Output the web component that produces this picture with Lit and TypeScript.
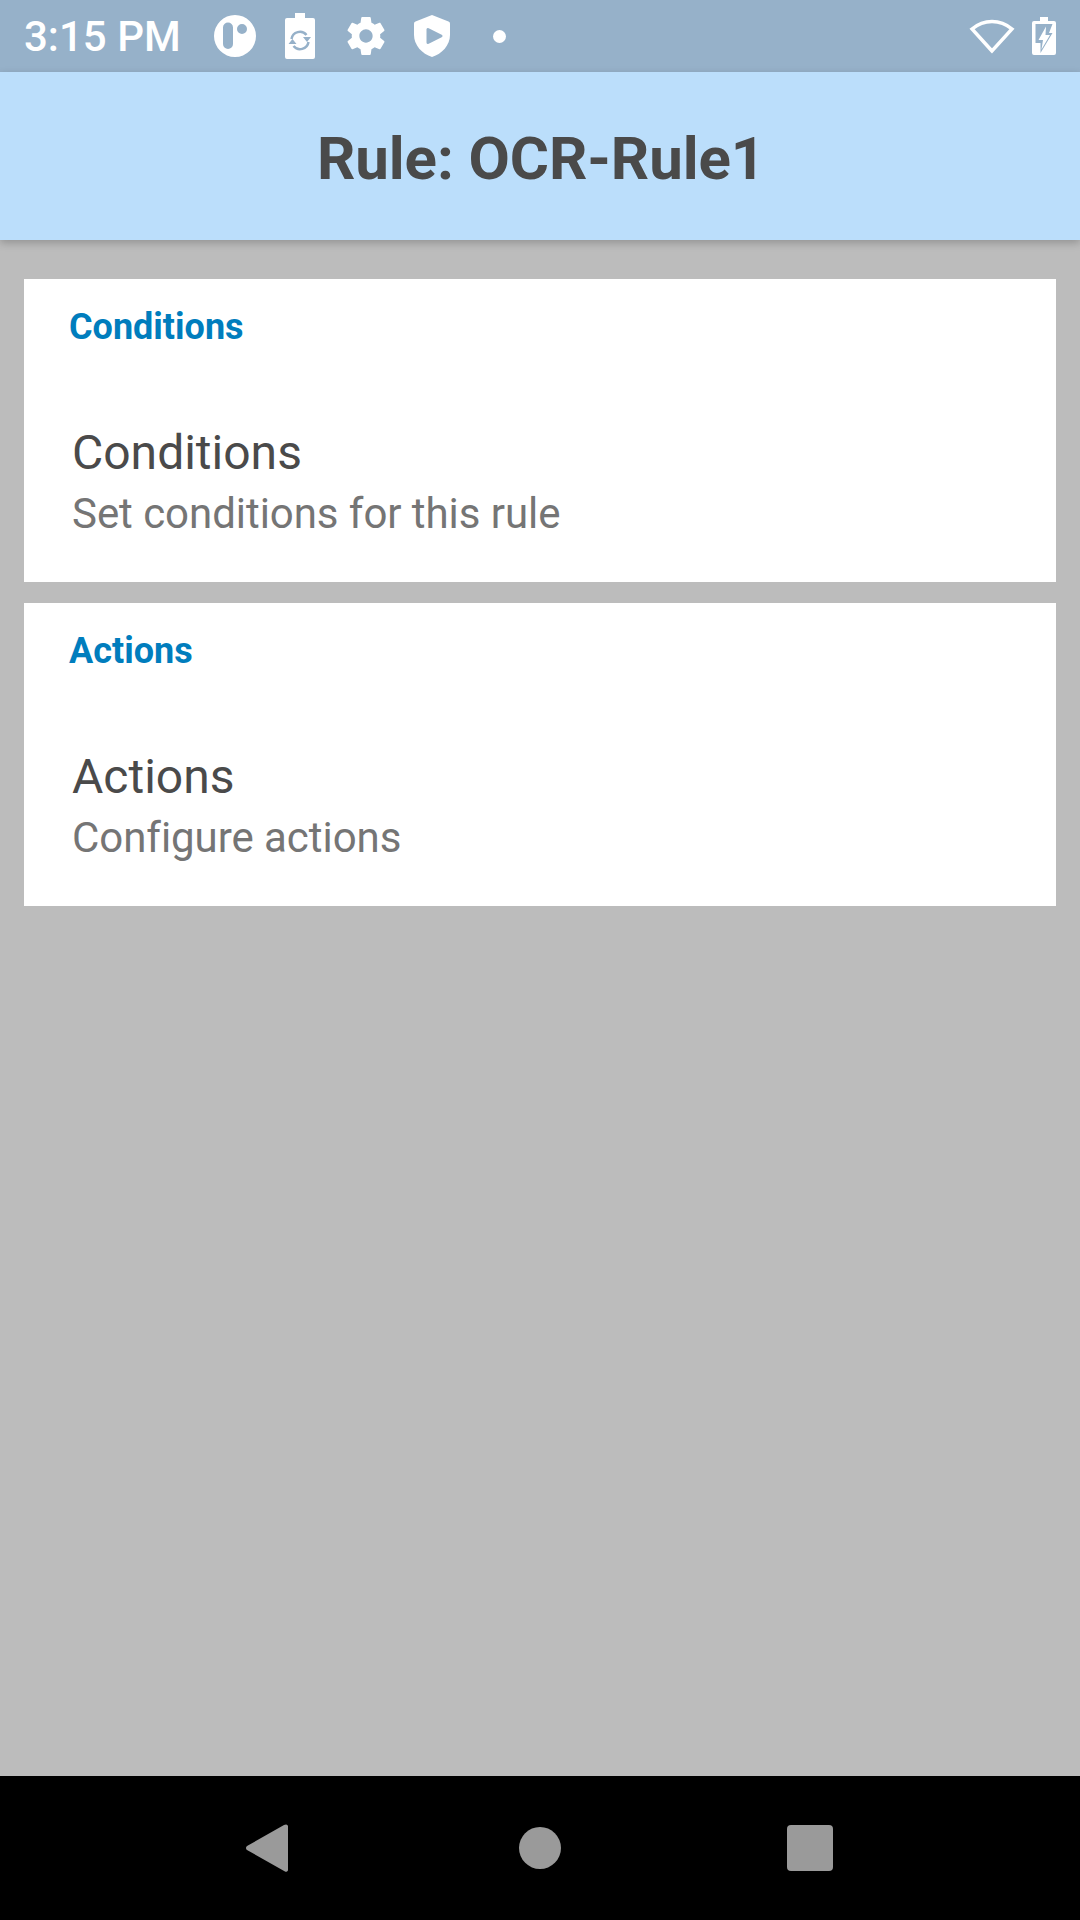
import {customElement} from "lit/decorators.js";
import {css, html, LitElement, svg} from "lit";

const sections = [
    {header: "Conditions", title: "Conditions", summary: "Set conditions for this rule"},
    {header: "Actions", title: "Actions", summary: "Configure actions"},
];

const appIcon = svg`<svg class="ic app" width="42" height="42" viewBox="0 0 42 42">
    <path fill="#fff" fill-rule="evenodd" d="M21 0a21 21 0 1 0 0 42a21 21 0 1 0 0-42ZM14 7.500a5 5 0 0 1 5 5V29a5 5 0 0 1-10 0V12.500a5 5 0 0 1 5-5ZM28 9a5 5 0 1 1 0 10a5 5 0 1 1 0-10Z"/>
</svg>`;

const batterySync = svg`<svg class="ic sync" width="30" height="46" viewBox="0 0 30 46">
    <path fill="#fff" d="M10 0h10v5h8a2 2 0 0 1 2 2v37a2 2 0 0 1-2 2H2a2 2 0 0 1-2-2V7a2 2 0 0 1 2-2h8Z"/>
    <g fill="none" stroke="#96b1c9" stroke-width="2.500">
        <path d="M6.500 26a8.500 8.500 0 0 1 15-4"/>
        <path d="M23.500 29a8.500 8.500 0 0 1-15 4"/>
    </g>
    <path fill="#96b1c9" d="M18 24h8l-4 5ZM3.500 31h8l-4-5Z"/>
</svg>`;

const gear = svg`<svg class="ic gear" width="38" height="38" viewBox="2 2 20 20">
    <path fill="#fff" d="M19.430 12.980c.040-.320.070-.640.070-.980s-.030-.660-.070-.980l2.110-1.650c.190-.150.240-.420.120-.640l-2-3.460c-.120-.220-.390-.300-.610-.220l-2.490 1c-.520-.400-1.080-.730-1.690-.980l-.380-2.650C14.460 2.180 14.250 2 14 2h-4c-.250 0-.460.180-.490.420l-.380 2.650c-.610.250-1.170.590-1.690.980l-2.490-1c-.230-.090-.490 0-.610.220l-2 3.460c-.130.220-.070.490.120.640l2.110 1.650c-.040.320-.070.650-.070.980s.030.660.070.980l-2.110 1.650c-.190.150-.240.420-.120.640l2 3.460c.120.220.390.300.610.220l2.490-1c.520.400 1.080.730 1.690.980l.380 2.650c.030.240.240.420.490.420h4c.250 0 .460-.180.490-.420l.380-2.650c.610-.250 1.170-.590 1.690-.980l2.490 1c.230.090.490 0 .610-.220l2-3.460c.120-.220.070-.490-.120-.640l-2.110-1.650ZM12 15.500c-1.930 0-3.500-1.570-3.500-3.500s1.570-3.500 3.500-3.500 3.500 1.570 3.500 3.500-1.570 3.500-3.500 3.500Z"/>
</svg>`;

const shieldPlay = svg`<svg class="ic shield" width="36" height="42" viewBox="0 0 36 42">
    <path fill="#fff" d="M18 0L34.500 6.400Q36 7 36 8.500V20C36 30 28 39 18 42C8 39 0 30 0 20V8.500Q0 7 1.500 6.400Z"/>
    <path fill="#96b1c9" stroke="#96b1c9" stroke-width="3" stroke-linejoin="round" d="M14 14.500V27.500L27 21Z"/>
</svg>`;

const wifi = svg`<svg class="ic" width="46" height="36" viewBox="0 0 46 36">
    <path fill="none" stroke="#fff" stroke-width="3.500" stroke-linejoin="miter" d="M23 33L3 11C15 1 31 1 43 11Z"/>
</svg>`;

const batteryCharging = svg`<svg class="ic batt" width="24" height="38" viewBox="0 0 24 38">
    <path fill="#fff" d="M8 0h8v4h6a2 2 0 0 1 2 2v30a2 2 0 0 1-2 2H2a2 2 0 0 1-2-2V6a2 2 0 0 1 2-2h6Z"/>
    <path fill="#96b1c9" d="M3.500 7H20.500L17 16H20.500L8.500 36V26H3.500Z"/>
    <path fill="#fff" d="M14 9.500L6.500 23H11L9.500 32.500L18 18H13.500Z"/>
</svg>`;

@customElement("app-root")
export class AppRoot extends LitElement {
    protected override render() {
        return html`
            <div class="status">
                <span class="clock">3:15 PM</span>
                ${appIcon}${batterySync}${gear}${shieldPlay}
                <span class="dot"></span>
                <span class="spacer"></span>
                ${wifi}${batteryCharging}
            </div>
            <header class="appbar">Rule: OCR-Rule1</header>
            <main class="content">
                ${sections.map(s => html`
                    <section class="card">
                        <div class="header">${s.header}</div>
                        <div class="title">${s.title}</div>
                        <div class="summary">${s.summary}</div>
                    </section>
                `)}
            </main>
            <nav class="nav">
                <svg width="44" height="50" viewBox="0 0 44 50">
                    <path fill="#9a9a9a" d="M41 1.500a2 2 0 0 1 2 1.500V47a2 2 0 0 1-3 1.500L2 27a2.500 2.500 0 0 1 0-4L39 2Z"/>
                </svg>
                <span class="home"></span>
                <span class="recents"></span>
            </nav>
        `;
    }

    static override styles = css`
        :host {
            display: flex;
            flex-direction: column;
            width: 1080px;
            height: 1920px;
            background: #bcbcbc;
            font-family: Roboto, "Liberation Sans", sans-serif;
        }
        .status {
            display: flex;
            align-items: center;
            flex: none;
            height: 72px;
            padding: 0 24px 0 24px;
            box-sizing: border-box;
            background: #96b1c9;
            color: #fff;
        }
        .clock {
            padding-top: 2px;
            font-size: 42px;
            font-weight: 500;
            line-height: 70px;
        }
        .ic {
            display: block;
            flex: none;
        }
        .app {
            margin-left: 33px;
        }
        .sync {
            margin-left: 29px;
        }
        .gear {
            margin-left: 32px;
        }
        .shield {
            margin-left: 29px;
        }
        .batt {
            margin-left: 17px;
        }
        .dot {
            width: 13px;
            height: 13px;
            margin-left: 43px;
            border-radius: 50%;
            background: #fff;
        }
        .spacer {
            flex: 1;
        }
        .appbar {
            flex: none;
            height: 168px;
            padding: 5px 0 0 2px;
            box-sizing: border-box;
            line-height: 163px;
            text-align: center;
            font-size: 60px;
            font-weight: 700;
            letter-spacing: -0.100px;
            color: #4a4a4a;
            background: #bbdefb;
            box-shadow: 0 3px 8px rgba(0, 0, 0, 0.22);
            position: relative;
        }
        .content {
            flex: 1;
            display: flex;
            flex-direction: column;
            gap: 21px;
            padding: 39px 24px 0;
        }
        .card {
            height: 303px;
            box-sizing: border-box;
            padding-top: 26px;
            background: #fff;
        }
        .header {
            margin-left: 45px;
            font-size: 36px;
            line-height: 44px;
            font-weight: 700;
            color: #007dbd;
        }
        .title {
            margin: 72px 0 0 48px;
            font-size: 48px;
            line-height: 64px;
            color: #4a4a4a;
        }
        .summary {
            margin: 1px 0 0 48px;
            font-size: 42px;
            letter-spacing: -0.050px;
            line-height: 56px;
            color: #757575;
        }
        .nav {
            flex: none;
            height: 144px;
            display: flex;
            align-items: center;
            background: #000;
            padding-left: 245px;
        }
        .home {
            width: 42px;
            height: 42px;
            margin-left: 230px;
            border-radius: 50%;
            background: #9a9a9a;
        }
        .recents {
            width: 46px;
            height: 46px;
            margin-left: 226px;
            border-radius: 4px;
            background: #9a9a9a;
        }
    `;
}

declare global {
    interface HTMLElementTagNameMap {
        "app-root": AppRoot;
    }
}
